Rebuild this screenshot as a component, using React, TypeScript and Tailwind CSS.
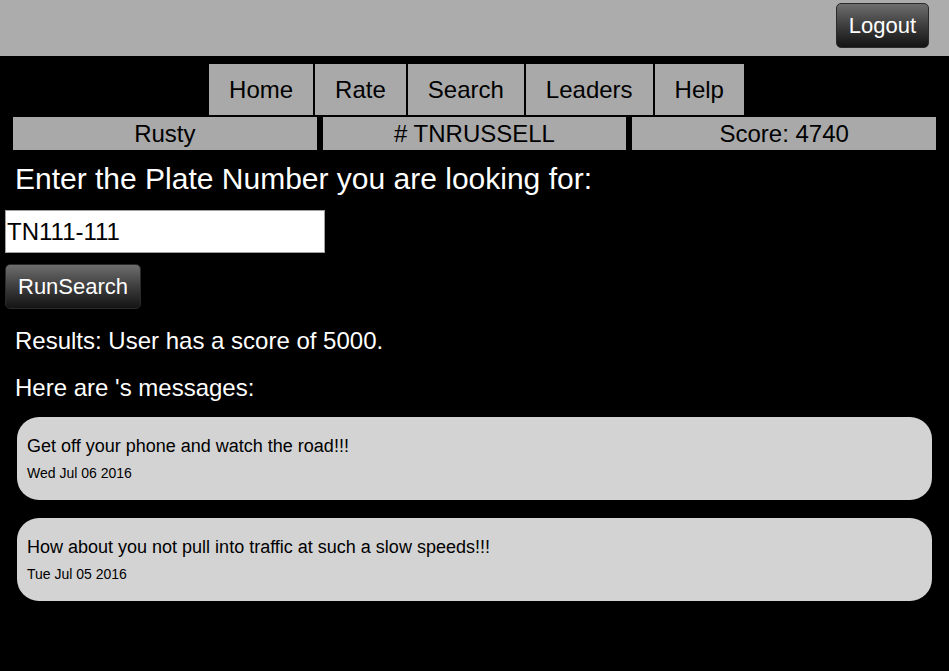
import React from "react";

const navItems = ["Home", "Rate", "Search", "Leaders", "Help"];

const messages = [
  { text: "Get off your phone and watch the road!!!", date: "Wed Jul 06 2016" },
  { text: "How about you not pull into traffic at such a slow speeds!!!", date: "Tue Jul 05 2016" },
];

function DarkButton({ label, className = "" }: { label: string; className?: string }) {
  return (
    <button
      className={
        "h-[45px] px-[12px] rounded-[5px] border border-[#2a2a2a] bg-gradient-to-b from-[#6e6e6e] to-[#141414] text-white text-[22px] leading-none " +
        className
      }
    >
      {label}
    </button>
  );
}

export default function App() {
  return (
    <div
      className="min-h-[671px] bg-black text-black"
      style={{ fontFamily: '"Liberation Sans", Arial, sans-serif' }}
    >
      <div className="h-[56px] bg-[#acacac] flex justify-end items-start pt-[3px] pr-[20px]">
        <DarkButton label="Logout" />
      </div>

      <div className="mt-[8px] flex justify-center gap-[2px] pl-[4px]">
        {navItems.map((item) => (
          <div
            key={item}
            className="h-[51px] px-5 bg-[#a9a9a9] flex items-center text-[24px]"
          >
            {item}
          </div>
        ))}
      </div>

      <div className="mt-[2px] grid grid-cols-3 gap-[6px] px-[13px]">
        {["Rusty", "# TNRUSSELL", "Score: 4740"].map((t) => (
          <div
            key={t}
            className="h-[33px] bg-[#a9a9a9] flex items-center justify-center text-[24px]"
          >
            {t}
          </div>
        ))}
      </div>

      <h2 className="mt-[11px] pl-[15px] text-[30px] leading-[36px] text-white">
        Enter the Plate Number you are looking for:
      </h2>

      <input
        className="block mt-[13px] ml-[5px] w-[320px] h-[43px] bg-white border border-[#a0a0a0] px-[1px] text-[24px] text-black outline-none"
        defaultValue="TN111-111"
      />

      <DarkButton label="RunSearch" className="mt-[11px] ml-[5px] block h-[44px]" />

      <p className="mt-[18px] pl-[15px] text-[24px] leading-[28px] text-white">
        Results: User has a score of 5000.
      </p>
      <p className="mt-[19px] pl-[15px] text-[24px] leading-[28px] text-white">
        Here are 's messages:
      </p>

      <div className="mt-[15px] mx-[17px] flex flex-col gap-[18px]">
        {messages.map((m) => (
          <div
            key={m.date}
            className="bg-[#d3d3d3] rounded-[22px] px-[10px] pt-[19px] pb-[19px]"
          >
            <div className="text-[18px] leading-[20px]">{m.text}</div>
            <div className="mt-[9px] text-[14px] leading-[16px]">{m.date}</div>
          </div>
        ))}
      </div>
    </div>
  );
}
